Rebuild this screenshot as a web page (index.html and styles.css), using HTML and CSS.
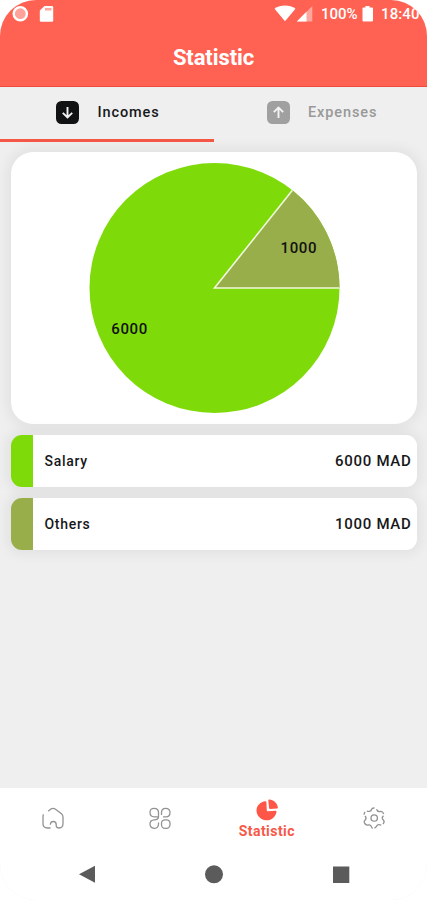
FILE: index.html
```html
<!DOCTYPE html>
<html lang="en">
<head>
<meta charset="utf-8">
<title>Statistic</title>
<link rel="stylesheet" href="styles.css">
</head>
<body>
<div class="screen">
  <header class="header">
    <div class="status">
      <svg class="status-left" width="60" height="28" viewBox="0 0 60 28">
        <circle cx="20.3" cy="13.7" r="6.6" fill="#ffa299" stroke="#fff" stroke-width="2.4"/>
        <path d="M44.5 6H52q1.200 0 1.200 1.200V20.500q0 1.200-1.200 1.200H41q-1.200 0-1.200-1.200V10.500z" fill="#fff"/>
        <path d="M45 8h6.500v2.500H45z" fill="#ffa79e"/>
      </svg>
      <svg class="signal" width="42" height="28" viewBox="0 0 42 28">
        <path d="M.5 8.800C6.500 4.500 15.500 4.500 21.500 8.800L11 21.300z" fill="#fff"/>
        <path d="M38.300 6v15.500H22.800z" fill="#ffa79e"/>
        <path d="M32.500 11.800v9.700H22.800z" fill="#fff"/>
      </svg>
      <span class="battery-text">100%</span>
      <svg class="battery" width="12" height="28" viewBox="0 0 12 28">
        <path d="M3.500 6h4v1.500H10q1 0 1 1V20.500q0 1-1 1H1.500q-1 0-1-1V8.500q0-1 1-1h2z" fill="#fff"/>
      </svg>
      <span class="clock">18:40</span>
    </div>
    <h1 class="title">Statistic</h1>
  </header>
  <nav class="tabs">
    <div class="tab active">
      <svg width="23" height="23" viewBox="0 0 23 23"><rect width="23" height="23" rx="5.500" fill="#111214"/><path d="M11.500 6v10.500M6.800 11.800l4.700 4.700 4.700-4.700" fill="none" stroke="#f3f3f3" stroke-width="1.900"/></svg>
      <span>Incomes</span>
    </div>
    <div class="tab">
      <svg width="23" height="23" viewBox="0 0 23 23"><rect width="23" height="23" rx="5.500" fill="#a0a0a0"/><path d="M11.500 17V6.500M6.800 11.200l4.700-4.700 4.700 4.700" fill="none" stroke="#f3f3f3" stroke-width="1.900"/></svg>
      <span>Expenses</span>
    </div>
  </nav>
  <main class="content">
    <section class="card chart">
      <svg width="252" height="252" viewBox="0 0 252 252">
        <circle cx="125.500" cy="126" r="125" fill="#7fda09"/>
        <path d="M125.500 126L203.400 28.300A125 125 0 0 1 250.500 126z" fill="#98ae4a"/>
        <path d="M203.400 28.300L125.500 126H250.500" fill="none" stroke="#f1f7dc" stroke-width="1.600"/>
        <text class="pie-label" x="209.800" y="91" text-anchor="middle">1000</text>
        <text class="pie-label" x="40.600" y="172" text-anchor="middle">6000</text>
      </svg>
    </section>
    <section class="card row salary"><span class="name">Salary</span><span class="amount">6000 MAD</span></section>
    <section class="card row others"><span class="name">Others</span><span class="amount">1000 MAD</span></section>
  </main>
  <nav class="bottom">
    <div class="item">
      <svg width="24" height="24" viewBox="0 0 24 24"><path d="M2.500 7.300Q2 8 2 9.500V16.500Q2 21 6.500 21H9.500M7.200 4.300L9.500 2.300Q12 .5 14.500 2.300L20.500 6.800Q22 8 22 10V16.500Q22 21 18 21Q15.200 21 15.200 18.500V17.500Q15.200 14.500 12.300 14.500T9.400 17.800"/></svg>
    </div>
    <div class="item">
      <svg width="24" height="24" viewBox="0 0 24 24"><rect x="13.500" y="12.800" width="8.500" height="8.500" rx="3.500"/><path d="M10.500 5.500Q10.500 1.300 6.200 1.300T2 5.500T6.200 9.800H10.500zM10.500 9.800Q10.500 12.800 6.200 12.800Q2 13 2 17T6.200 21.300T10.500 17V15.500M13.500 8V5.500Q13.500 1.300 17.700 1.300T22 5.500Q22 9.800 18 9.800H15"/></svg>
    </div>
    <div class="item current">
      <svg width="24" height="24" viewBox="0 0 24 24"><path d="M10.500 3.300Q11.300 3.200 11.400 4L11.800 12.400Q11.900 13.300 12.800 13.200L20.600 12.700Q21.700 12.700 21.500 13.800C20.500 19.500 16 22.800 11 22.300C5.500 21.800 1.500 17.600 1.500 12.500C1.500 7.700 5.500 3.800 10.500 3.300z"/><path d="M14.200 1.400C18.700 1.600 22.300 5 22.900 9.600Q23 10.500 22 10.600L15.200 11Q14.200 11 14.100 10.100L13.300 2.400Q13.200 1.400 14.200 1.400z"/></svg>
      <span>Statistic</span>
    </div>
    <div class="item">
      <svg width="24" height="24" viewBox="0 0 24 24"><circle cx="12.200" cy="11" r="3.200"/><path d="M14.500 2.300Q15.300 4.800 18 4.500Q20.500 4 21.800 7M21.500 8.800Q19 11 21.500 13.200Q23 14.500 21 17M19.300 18.100Q15 16.800 14.500 19.500L12.500 21.300M10.800 21.300Q9.500 21 9.300 19.500Q8.500 17.400 6 18Q3.500 18.500 2.200 15.200Q2 14 3.200 13Q5 11 3 9M2.200 7.700Q1.800 6.700 3 4.800M4.800 4.100Q8.800 5.200 9.500 2.500Q10 .8 12.500 1"/></svg>
    </div>
  </nav>
  <nav class="system">
    <div><svg width="20" height="20" viewBox="0 0 20 20"><path d="M18 1.800v17L2 10.300z"/></svg></div>
    <div><svg width="20" height="20" viewBox="0 0 20 20"><circle cx="10" cy="10.300" r="9"/></svg></div>
    <div><svg width="20" height="20" viewBox="0 0 20 20"><path d="M2 2.500h16.300v16.500H2z"/></svg></div>
  </nav>
</div>
</body>
</html>
```
FILE: styles.css
```css
* { box-sizing: border-box; }
body { margin: 0; background: #fff; font-family: Roboto, "Liberation Sans", sans-serif; }
svg { display: block; flex: none; }
.screen {
  width: 427px;
  height: 900px;
  display: flex;
  flex-direction: column;
  background: #efefef;
  border-radius: 36px;
  overflow: hidden;
}
.header { height: 87px; flex: none; background: #ff6152; border-bottom: 1px solid #ef4b3d; color: #fff; }
.status { display: flex; height: 28px; align-items: center; font-size: 15px; font-weight: 500; white-space: nowrap; }
.signal { margin-left: 214px; }
.battery-text { margin-left: 5px; width: 41px; }
.clock { margin-left: 7px; letter-spacing: .1px; }
.title { margin: 15px 0 0; font-size: 22px; line-height: 30px; font-weight: 700; text-align: center; letter-spacing: -.1px; }
.tabs { display: grid; grid-template-columns: 1fr 1fr; height: 55px; flex: none; }
.tab { display: flex; align-items: center; padding: 0 0 1px 53px; gap: 18.5px; border-bottom: 3px solid transparent; color: #999; font-size: 14.5px; font-weight: 500; letter-spacing: .9px; }
.tab.active { padding-left: 56px; border-color: #f65848; color: #17181a; }
.content { flex: 1; padding: 10px 10px 0 11px; display: flex; flex-direction: column; gap: 11px; }
.card { background: #fff; box-shadow: 0 0 12px 5px rgba(0, 0, 0, .05); }
.chart { height: 272px; border-radius: 22px; display: flex; justify-content: center; padding: 10px 0 0 2px; }
.pie-label { font-size: 15px; font-weight: 500; letter-spacing: .6px; fill: #111; }
.row { height: 52px; border-radius: 11px; border-left: 22px solid; display: flex; align-items: center; justify-content: space-between; padding: 0 5.5px 0 11.5px; font-weight: 500; }
.salary { border-color: #7fda09; }
.others { border-color: #98ae4a; }
.name { color: #17181a; font-size: 14px; letter-spacing: .7px; }
.amount { color: #17181a; font-size: 15px; letter-spacing: .7px; }
.bottom { height: 62px; flex: none; background: #fff; display: grid; grid-template-columns: repeat(4, 1fr); }
.item { display: flex; flex-direction: column; align-items: center; justify-content: center; fill: none; stroke: #929292; stroke-width: 1.3; }
.current { fill: #ff5747; stroke: none; color: #f65848; font-size: 14px; line-height: 18px; font-weight: 700; letter-spacing: .45px; }
.system { height: 50px; flex: none; background: #fff; display: flex; justify-content: center; gap: 107px; padding-top: 14px; fill: #5b5b5b; }
```
